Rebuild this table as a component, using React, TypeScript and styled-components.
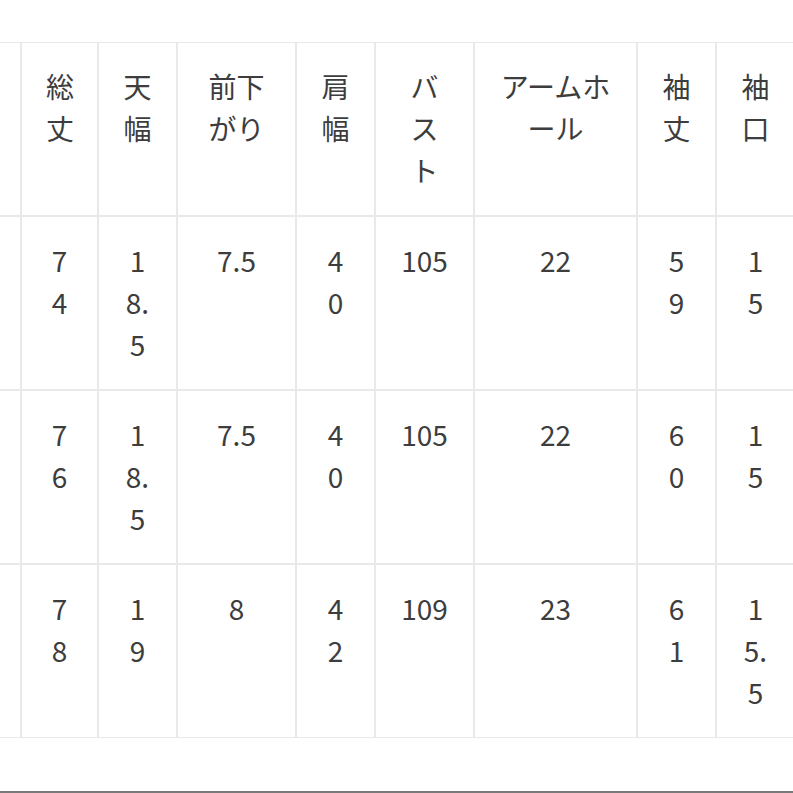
import React from 'react';
import styled, { createGlobalStyle } from 'styled-components';

const GlobalStyle = createGlobalStyle`
  html, body {
    margin: 0;
    padding: 0;
    background: #ffffff;
  }
  body {
    font-family: "Noto Sans CJK JP", "Noto Sans", sans-serif;
    color: #3d3d3d;
  }
`;

const Page = styled.div`
  width: 793px;
  height: 793px;
  overflow: hidden;
  display: flex;
  flex-direction: column;
  padding-top: 42px;
  box-sizing: border-box;
`;

const Scroller = styled.div`
  overflow: hidden;
`;

const SizeTable = styled.table`
  margin-left: -139px;
  table-layout: fixed;
  border-collapse: separate;
  border-spacing: 0;
  width: 934px;
  font-size: 28px;
  line-height: 42px;
`;

const Cell = styled.td<{ $w: number }>`
  box-sizing: border-box;
  width: ${(p) => p.$w}px;
  padding: 22px 24px 24px;
  border: 1px solid #e9e9e9;
  text-align: center;
  vertical-align: top;
  font-weight: 400;
  word-break: break-all;
  color: #3d3d3d;
`;

const HeadCell = styled(Cell).attrs({ as: 'th' })``;

const Bottom = styled.div`
  margin-top: auto;
  height: 2px;
  background: #7a7a7a;
`;

const widths = [160, 77, 79, 119, 79, 99, 163, 79, 79];

const headers = ['サイズ', '総丈', '天幅', '前下がり', '肩幅', 'バスト', 'アームホール', '袖丈', '袖口'];

const rows = [
  ['S', '74', '18.5', '7.5', '40', '105', '22', '59', '15'],
  ['M', '76', '18.5', '7.5', '40', '105', '22', '60', '15'],
  ['L', '78', '19', '8', '42', '109', '23', '61', '15.5'],
];

export default function App() {
  return (
    <>
      <GlobalStyle />
      <Page>
        <Scroller>
          <SizeTable>
            <thead>
              <tr>
                {headers.map((h, i) => (
                  <HeadCell key={h} $w={widths[i]}>
                    {h}
                  </HeadCell>
                ))}
              </tr>
            </thead>
            <tbody>
              {rows.map((row) => (
                <tr key={row[0]}>
                  {row.map((v, i) => (
                    <Cell key={i} $w={widths[i]}>
                      {v}
                    </Cell>
                  ))}
                </tr>
              ))}
            </tbody>
          </SizeTable>
        </Scroller>
        <Bottom />
      </Page>
    </>
  );
}
